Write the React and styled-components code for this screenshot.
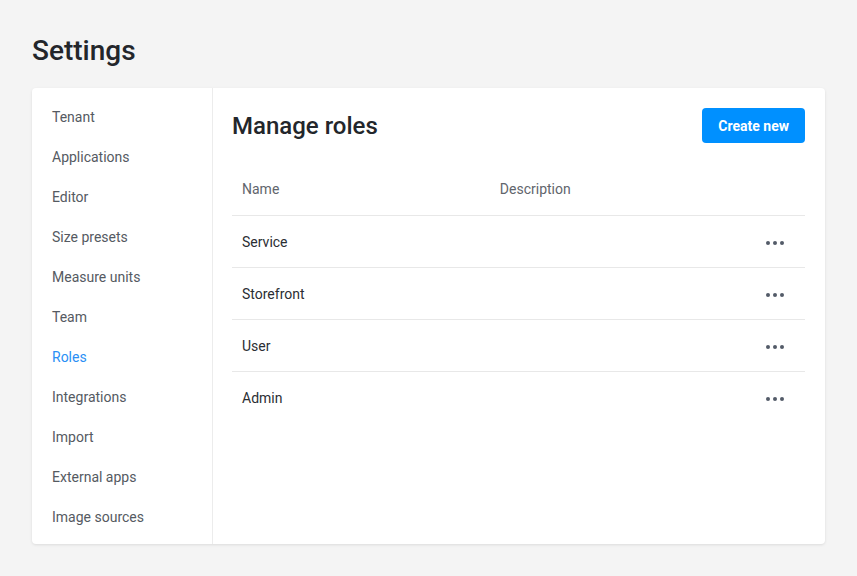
import React from "react"
import styled, { createGlobalStyle } from "styled-components"

const GlobalStyle = createGlobalStyle`
    body {
        margin: 0;
        background: #f4f4f4;
        font-family: Roboto, "Liberation Sans", sans-serif;
    }
`

const Page = styled.div`
    padding: 32px 32px;
`

const PageTitle = styled.h1`
    margin: 0 0 18px;
    font-size: 28px;
    font-weight: 500;
    line-height: 38px;
    color: #23262b;
`

const Card = styled.div`
    display: flex;
    background: #fff;
    border-radius: 4px;
    box-shadow: 0 1px 3px rgba(0, 0, 0, 0.1);
`

const Sidebar = styled.nav`
    width: 180px;
    flex-shrink: 0;
    border-right: 1px solid #ececec;
    padding: 9px 0 7px;
`

const NavItem = styled.div`
    height: 40px;
    line-height: 40px;
    padding: 0 20px;
    font-size: 14px;
    color: ${props => props.active ? "#2a8ff5" : "#555a62"};
    cursor: pointer;
`

const Main = styled.section`
    flex: 1;
    padding: 20px 20px 20px 19px;
`

const Header = styled.div`
    display: flex;
    justify-content: space-between;
    align-items: center;
    margin-bottom: 20px;
`

const Title = styled.h2`
    margin: 0;
    font-size: 24px;
    font-weight: 500;
    color: #23262b;
`

const Button = styled.button`
    height: 35px;
    padding: 0 16px;
    border: none;
    border-radius: 4px;
    background: #0090ff;
    color: #fff;
    font-family: inherit;
    font-size: 14px;
    font-weight: 700;
    cursor: pointer;
`

const Table = styled.table`
    width: 100%;
    border-collapse: collapse;
    font-size: 14px;
`

const HeadCell = styled.th`
    height: 52px;
    padding: 0 10px;
    text-align: left;
    font-weight: 400;
    color: #61656c;
    border-bottom: 1px solid #e8e8e8;
    width: ${props => props.width || "auto"};
`

const Row = styled.tr`
    & + & td {
        border-top: 1px solid #e8e8e8;
    }
`

const Cell = styled.td`
    height: 51px;
    padding: 0 10px;
    color: #2b2e33;
    text-align: ${props => props.right ? "right" : "left"};
    padding-right: ${props => props.right ? "21px" : "10px"};
`

const Dots = styled.span`
    display: inline-flex;
    gap: 3px;
    vertical-align: middle;
    cursor: pointer;

    > i {
        width: 4px;
        height: 4px;
        border-radius: 50%;
        background: #535b68;
    }
`

const navItems = [
    "Tenant",
    "Applications",
    "Editor",
    "Size presets",
    "Measure units",
    "Team",
    "Roles",
    "Integrations",
    "Import",
    "External apps",
    "Image sources",
]

const roles = ["Service", "Storefront", "User", "Admin"]

export default function App() {
    return (
        <Page>
            <GlobalStyle />
            <PageTitle>Settings</PageTitle>
            <Card>
                <Sidebar>
                    {navItems.map(item => (
                        <NavItem key={item} active={item === "Roles"}>
                            {item}
                        </NavItem>
                    ))}
                </Sidebar>
                <Main>
                    <Header>
                        <Title>Manage roles</Title>
                        <Button>Create new</Button>
                    </Header>
                    <Table>
                        <thead>
                            <tr>
                                <HeadCell width="45%">Name</HeadCell>
                                <HeadCell>Description</HeadCell>
                                <HeadCell width="60px"></HeadCell>
                            </tr>
                        </thead>
                        <tbody>
                            {roles.map(role => (
                                <Row key={role}>
                                    <Cell>{role}</Cell>
                                    <Cell></Cell>
                                    <Cell right>
                                        <Dots><i /><i /><i /></Dots>
                                    </Cell>
                                </Row>
                            ))}
                        </tbody>
                    </Table>
                </Main>
            </Card>
        </Page>
    )
}
